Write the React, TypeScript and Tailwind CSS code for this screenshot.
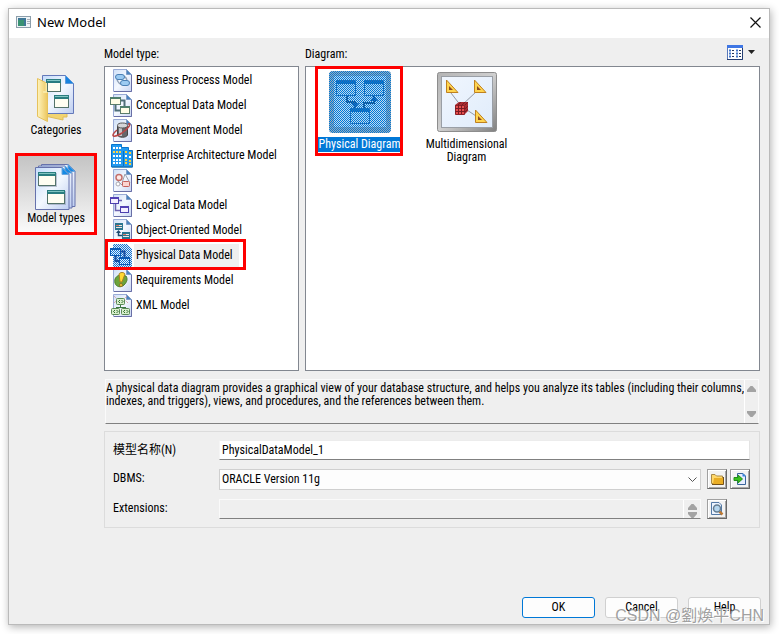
import React from "react";

const uiFont = "font-['Roboto_Condensed',Roboto,'Liberation_Sans','Noto_Sans_CJK_SC',sans-serif]";

function Page({ children }: { children?: React.ReactNode }) {
  return (
    <svg viewBox="0 0 24 24" className="block h-6 w-6 shrink-0" aria-hidden="true">
      <defs>
        <linearGradient id="page" x1="0" y1="0" x2="1" y2="1">
          <stop offset="0" stopColor="#cfe0f7" />
          <stop offset="0.5" stopColor="#f4f8ff" />
          <stop offset="1" stopColor="#c9d6f2" />
        </linearGradient>
      </defs>
      <path d="M3.500 .5H16.500L21.500 5.500V22.500H3.500Z" fill="url(#page)" stroke="#9aabd6" />
      <path d="M4 22.500H21.500V6" fill="none" stroke="#696fa6" />
      <path d="M16.500 .5V5.500H21.500Z" fill="#4b83bd" stroke="#7f9dc8" />
      {children}
    </svg>
  );
}

function Win({ x, y, w, h, stroke, fill, bar }: { x: number; y: number; w: number; h: number; stroke: string; fill: string; bar: string }) {
  return (
    <g>
      <rect x={x + 0.5} y={y + 0.5} width={w - 1} height={h - 1} fill={fill} stroke={stroke} />
      <rect x={x} y={y} width={w} height={2} fill={bar} />
    </g>
  );
}

const BusinessIcon = () => (
  <Page>
    <g stroke="#4a7fb4" fill="#9ccbf2">
      <path d="M7 9c0 5 4 7 6 6M12 7c4 0 5 3 5 6" fill="none" stroke="#8fa0b5" strokeWidth="1.500" />
      <rect x="5.500" y="5.500" width="9" height="5" rx="2.500" />
      <rect x="10.500" y="11.500" width="9" height="5" rx="2.500" />
    </g>
  </Page>
);
const ConceptualIcon = () => (
  <Page>
    <path d="M5.500 10v6.500H12M11 6.500h3.500V12" fill="none" stroke="#4f6f78" strokeWidth="2" />
    <Win x={0} y={3} w={11} h={8} stroke="#5b7d6a" fill="#fffde6" bar="#4f7f6c" />
    <Win x={10} y={12} w={10} h={8} stroke="#5b7d6a" fill="#fffde6" bar="#4f7f6c" />
  </Page>
);
const MovementIcon = () => (
  <Page>
    <path d="M7.500 7v9c1 3 9 3 10 0V7" fill="#66676b" stroke="#444" />
    <path d="M9 8v9h3V8" fill="#c4c4c8" />
    <ellipse cx="12.500" cy="6.500" rx="5" ry="2.500" fill="#d5d5d8" stroke="#555" />
    <path d="M7 11c-8 7-3 8 5 3C19 9 22 4 18 5" fill="none" stroke="#b94747" strokeWidth="1.500" />
  </Page>
);
const EnterpriseIcon = () => (
  <svg viewBox="0 0 24 24" className="block h-6 w-6 shrink-0" aria-hidden="true">
    <path d="M1.500 .5H11.500V3.500H18.500V6.500H22.500V23H1.500Z" fill="#2299f0" stroke="#0877cf" />
    <path d="M13.500 7V22" stroke="#0973c4" />
    <path d="M22.500 7V23H2" fill="none" stroke="#2570a6" />
    {[4, 8, 12, 16, 19].map((y) => (
      <path key={y} d={`M3 ${y}h2M6 ${y}h2M9 ${y}h2`} stroke={y === 8 ? "#ffd54a" : "#ffffff"} strokeWidth="2" />
    ))}
    {[8, 12, 16, 19].map((y) => (
      <path key={y} d={`M15 ${y}h2M19 ${y + 1}h2`} stroke={y === 12 ? "#ffffff" : "#ffcf33"} strokeWidth="2" />
    ))}
  </svg>
);
const FreeIcon = () => (
  <Page>
    <path d="M12 14 15 5l5 9M8 12l4 4 5-2" fill="none" stroke="#9ba0ad" />
    <circle cx="9" cy="8.500" r="3" fill="#fde9e7" stroke="#c4706b" strokeWidth="1.500" />
    <circle cx="8" cy="15" r="2" fill="#fff" stroke="#a9a9b5" />
    <rect x="12.500" y="12.500" width="7" height="5" rx="1" fill="#fbd5d1" stroke="#c4605b" />
  </Page>
);
const LogicalIcon = () => (
  <Page>
    <path d="M5.500 9v7.500H11M9 6.500h3" fill="none" stroke="#6c62b0" strokeWidth="1.500" />
    <Win x={0} y={3} w={9} h={7} stroke="#4c3fae" fill="#f4efff" bar="#5342b5" />
    <Win x={10} y={12} w={9} h={7} stroke="#4c3fae" fill="#f4efff" bar="#5342b5" />
  </Page>
);
const ObjectIcon = () => (
  <Page>
    <path d="M8.500 12v4.500H13" fill="none" stroke="#1e4a70" strokeWidth="1.500" />
    <path d="M6 14l2.500-3 2.500 3z" fill="#1e4a70" />
    {[[5, 4], [12, 13]].map(([x, y]) => (
      <g key={x}>
        <rect x={x} y={y} width="8" height="7" fill="#2a7590" />
        <path d={`M${x + 1} ${y + 2}.500h6M${x + 1} ${y + 4}.500h6`} stroke="#f0e4dd" />
        <path d={`M${x + 1} ${y + 2}.500h3`} stroke="#d87867" />
      </g>
    ))}
  </Page>
);
const PhysicalIcon = () => (
  <svg viewBox="0 0 24 24" className="block h-6 w-6 shrink-0" aria-hidden="true">
    <defs>
      <pattern id="smallDither" width="2" height="2" patternUnits="userSpaceOnUse">
        <path d="M0 0h1v1H0zM1 1h1v1H1z" fill="#1575d2" />
      </pattern>
    </defs>
    <path d="M3 0H17L22 5V23H3Z" fill="#dfe9f6" />
    <path d="M3 0H17L22 5V23H3Z" fill="url(#smallDither)" shapeRendering="crispEdges" />
    <path d="M5.500 10v7H11M11 7.500h3.500V13" fill="none" stroke="#174da0" strokeWidth="2" />
    <Win x={0} y={4} w={11} h={8} stroke="#0a59b4" fill="#e4f2ff" bar="#0a59b4" />
    <Win x={9} y={13} w={11} h={8} stroke="#0a59b4" fill="#e4f2ff" bar="#0a59b4" />
    <path d="M1 6h9v5H1zM10 15h9v5h-9z" fill="url(#smallDither)" shapeRendering="crispEdges" />
  </svg>
);
const RequirementsIcon = () => (
  <Page>
    <path d="M10 6c-4 1-6 4-5 8s6 5 9 2 4-6 2-9z" fill="#6ca43c" stroke="#4c7d2d" />
    <path d="M9 5C10 3 14 3 15 5L12 13H10Z" fill="#ffd832" stroke="#a78022" />
    <circle cx="11" cy="16" r="1.500" fill="#ffd832" stroke="#89702a" />
  </Page>
);
const XmlIcon = () => (
  <Page>
    <path d="M10.500 10v4M6 13.500h10" fill="none" stroke="#3c7744" />
    <path d="M4 2 8 6M17 2 13 6M4 9l3-3M18 9l-3-3" stroke="#db8b93" strokeDasharray="1 1" />
    {[[6, 4], [1, 14], [11, 14]].map(([x, y]) => (
      <g key={x}>
        <rect x={x + 0.5} y={y + 0.5} width="8" height="6" rx="1" fill="#d9f0cd" stroke="#5b8b55" />
        <path d={`M${x + 4} ${y + 2} ${x + 2.5} ${y + 3.5}l1.500 1.500M${x + 5.5} ${y + 2}l1.500 1.500-1.500 1.500`} fill="none" stroke="#2e6a2e" />
      </g>
    ))}
  </Page>
);

const models = [
  { name: "Business Process Model", Icon: BusinessIcon },
  { name: "Conceptual Data Model", Icon: ConceptualIcon },
  { name: "Data Movement Model", Icon: MovementIcon },
  { name: "Enterprise Architecture Model", Icon: EnterpriseIcon },
  { name: "Free Model", Icon: FreeIcon },
  { name: "Logical Data Model", Icon: LogicalIcon },
  { name: "Object-Oriented Model", Icon: ObjectIcon },
  { name: "Physical Data Model", Icon: PhysicalIcon, selected: true },
  { name: "Requirements Model", Icon: RequirementsIcon },
  { name: "XML Model", Icon: XmlIcon },
];

const CategoriesIcon = () => (
  <svg viewBox="0 0 40 50" className="block h-[50px] w-10" aria-hidden="true">
    <defs>
      <linearGradient id="sidePage" x1="0" y1="0" x2="1" y2="1">
        <stop offset="0" stopColor="#c4dcfb" />
        <stop offset=".5" stopColor="#f3f8ff" />
        <stop offset="1" stopColor="#bdcdf0" />
      </linearGradient>
      <linearGradient id="folder" x1="0" y1="0" x2="1" y2="0">
        <stop offset="0" stopColor="#fff4bd" />
        <stop offset="1" stopColor="#ecc75f" />
      </linearGradient>
    </defs>
    <path d="M9 38H31V43H27V46L9 42Z" fill="#f2d471" stroke="#dfbd5a" />
    <path d="M6.500 1.500H29.500L37.500 9.500V39.500H6.500Z" fill="url(#sidePage)" stroke="#6479ba" />
    <path d="M29.500 1.500V9.500H37.500Z" fill="#1884e0" stroke="#5d99dc" />
    <path d="M1.500 4.500 11.500 9.500V47.500L1.500 42.500Z" fill="url(#folder)" stroke="#e6c25c" />
    <path d="M10.500 9V18H7" fill="none" stroke="#f8e8a4" strokeWidth="2" />
    <rect x="11.500" y="5.500" width="13" height="12" fill="#fffef2" stroke="#54736a" />
    <rect x="10" y="5" width="15" height="4" fill="#2a7d80" />
    <rect x="18.500" y="21.500" width="14" height="12" fill="#fffef2" stroke="#54736a" />
    <rect x="18" y="21" width="15" height="4" fill="#2a7d80" />
    <path d="M11 6.500h13M19 22.500h13" stroke="#84c7c5" />
  </svg>
);

const ModelTypesIcon = () => (
  <svg viewBox="0 0 44 50" className="block h-[50px] w-11" aria-hidden="true">
    {[6, 3, 0].map((o) => (
      <g key={o}>
        <path d={`M${1.5 + o} ${5.5 - o / 2}H${28 + o}L${35 + o} ${12 - o / 2}V${47.5 - o / 2}H${1.5 + o}Z`} fill="url(#sidePage)" stroke="#6672ac" />
        <path d={`M${28 + o} ${5.5 - o / 2}V${12.5 - o / 2}H${35 + o}Z`} fill="#168be5" stroke="#69a6de" />
      </g>
    ))}
    {[[4, 10], [13, 28]].map(([x, y]) => (
      <g key={x}>
        <rect x={x + 1} y={y + 1} width="18" height="14" fill="#8590a5" opacity=".5" />
        <rect x={x + 0.5} y={y + 0.5} width="17" height="13" fill="#fffef2" stroke="#54736a" />
        <rect x={x} y={y} width="18" height="4" fill="#2a7d80" />
        <path d={`M${x + 1} ${y + 1}.500h16`} stroke="#80c4c0" />
      </g>
    ))}
  </svg>
);

const PhysicalDiagramIcon = () => (
  <svg viewBox="0 0 62 62" className="block h-[62px] w-[62px]" aria-hidden="true">
    <defs>
      <pattern id="dither" width="2" height="2" patternUnits="userSpaceOnUse">
        <path d="M0 0h1v1H0zM1 1h1v1H1z" fill="#0078d7" />
      </pattern>
    </defs>
    <rect width="62" height="62" rx="4" fill="#9eacb8" />
    <rect x="5" y="5" width="52" height="51" fill="#bfdaf0" />
    <path d="M18 25V31H26V37M35 37V32H45V25" fill="none" stroke="#244c7c" strokeWidth="2" />
    <path d="M22 32h8l-4 5zM41 30h8l-4-5z" fill="#1556a4" />
    <path d="M7.500 9.500h19v15h-19zM35.500 9.500h19v15h-19zM21.500 37.500h19v15h-19z" fill="#b9d8ef" stroke="#2869ae" />
    <path d="M7 10h20v3H7zM35 10h20v3H35zM21 38h20v3H21z" fill="#1767b3" />
    <rect width="62" height="62" rx="4" fill="url(#dither)" />
  </svg>
);

const MultiDiagramIcon = () => (
  <svg viewBox="0 0 60 60" className="block h-[60px] w-[60px]" aria-hidden="true">
    <defs>
      <linearGradient id="multiFrame" x1="0" y1="0" x2="1" y2="1">
        <stop offset="0" stopColor="#b4b4b4" />
        <stop offset=".5" stopColor="#cfcfcf" />
        <stop offset="1" stopColor="#808080" />
      </linearGradient>
      <linearGradient id="multiInner" x1="0" y1="0" x2="1" y2="1">
        <stop offset="0" stopColor="#f0f6fe" />
        <stop offset="1" stopColor="#e0ecfb" />
      </linearGradient>
    </defs>
    <rect x=".5" y=".5" width="59" height="59" rx="2" fill="url(#multiFrame)" stroke="#8d8d8d" />
    <rect x="4.500" y="4.500" width="51" height="51" fill="url(#multiInner)" stroke="#9a9fa6" />
    <path d="M14 21 24 34 40 19M24 34 42 46" fill="none" stroke="#9299a4" />
    {[[9, 8], [37, 8], [38, 38]].map(([x, y]) => (
      <g key={`${x}-${y}`}>
        <path d={`M${x + 0.5} ${y}V${y + 12}.500H${x + 12}Z`} fill="#ffd44f" stroke="#bf8120" />
        <path d={`M${x + 3} ${y + 6}V${y + 10}H${x + 7}Z`} fill="#8b4a1f" />
      </g>
    ))}
    <path d="M18 33 22 30H31V39L28 42H18Z" fill="#a92b30" />
    <path d="M18.500 33.500H27.500V42.500H18.500Z" fill="#e54e4d" stroke="#8c2028" />
    <path d="M21.500 33v9M24.500 33v9M18 36.500h10M18 39.500h10M28 33l3-3M28 37l3-3M28 40l3-3M21 33l3-3M25 33l3-3" stroke="#7b1b23" />
  </svg>
);

function Arrow({ down }: { down?: boolean }) {
  return (
    <svg viewBox="0 0 9 6" className="block h-[6px] w-[9px] shrink-0" aria-hidden="true">
      <path d={down ? "M0 0H9V2L5.500 6H3.500L0 2Z" : "M0 6H9V4L5.500 0H3.500L0 4Z"} fill="#a3a3a3" />
    </svg>
  );
}

function ToolButton({ label, children }: { label: string; children: React.ReactNode }) {
  return (
    <button type="button" aria-label={label} className="flex h-5 w-5 items-center justify-center border border-t-[#a0a0a0] border-r-[#696969] border-b-[#696969] border-l-[#a0a0a0] bg-[#f3f3f3] shadow-[inset_1px_1px_0_white,inset_-1px_-1px_0_#a8a8a8]">
      {children}
    </button>
  );
}

export default function App() {
  return (
    <div className={`flex min-h-screen bg-white pt-2 pr-[9px] pb-[9px] pl-2 text-[12px] leading-[13px] text-black ${uiFont}`}>
      <main className="relative flex min-w-0 flex-1 flex-col border border-[#bababa] bg-[#efefef] shadow-[1px_2px_8px_rgba(0,0,0,0.3)]">
        <header className="flex h-[29px] shrink-0 items-center bg-white pr-2 pb-[3px] pl-[7px]">
          <svg viewBox="0 0 15 12" className="h-3 w-[15px]" aria-hidden="true">
            <rect x=".5" y=".5" width="14" height="11" fill="#eef3f6" stroke="#8c9eab" />
            <rect x="2" y="2" width="8" height="8" fill="#3e7797" />
            <rect x="2" y="4" width="6" height="6" fill="#399273" />
            <path d="M11 3.500h3M11 5.500h3M11 7.500h3" stroke="#a7b0b9" />
          </svg>
          <h1 className="ml-[6px] flex-1 font-['Noto_Sans',sans-serif] text-[13px] leading-4">New Model</h1>
          <button type="button" aria-label="Close" className="p-0">
            <svg viewBox="0 0 11 11" className="block h-[11px] w-[11px]" aria-hidden="true">
              <path d="M.5 .5 10.500 10.500M10.500 .5 .5 10.500" stroke="#111" strokeWidth="1.200" />
            </svg>
          </button>
        </header>

        <div className="flex flex-1 gap-[7px] pr-[9px] pb-[6px] pl-[6px]">
          <nav className="flex w-[82px] shrink-0 flex-col pt-[34px]">
            <button type="button" className="flex h-[81px] flex-col items-center pt-[2px]">
              <CategoriesIcon />
              <span>Categories</span>
            </button>
            <button type="button" aria-pressed="true" className="flex h-[82px] flex-col items-center border-[3px] border-[#fe0000] bg-linear-to-b from-[#c4c4c4] via-[#dedede] to-[#fafafa] pt-[6px]">
              <ModelTypesIcon />
              <span>Model types</span>
            </button>
          </nav>

          <div className="flex min-w-0 flex-1 flex-col">
            <div className="flex flex-1 gap-[6px]">
              <section className="flex w-[195px] shrink-0 flex-col">
                <h2 className="flex h-7 items-center pt-1">Model type:</h2>
                <ul className="relative flex-1 border border-[#828790] bg-white pt-px">
                  {models.map(({ name, Icon, selected }) => (
                    <li key={name} className="h-[25px]">
                      <button type="button" className="flex h-[25px] items-center pl-[5px]">
                        <Icon />
                        <span className={selected ? "flex h-6 items-center bg-[#efefef] pr-[6px] pl-[2px]" : "pl-[2px]"}>{name}</span>
                      </button>
                    </li>
                  ))}
                  <li aria-hidden="true" className="pointer-events-none absolute top-[172px] left-0 h-[31px] w-[141px] border-[3px] border-[#fe0000]" />
                </ul>
              </section>

              <section className="flex min-w-0 flex-1 flex-col">
                <div className="flex h-7 items-center justify-between pr-[5px]">
                  <h2 className="pt-1">Diagram:</h2>
                  <button type="button" aria-label="View" className="flex items-center gap-[5px]">
                    <svg viewBox="0 0 16 15" className="h-[15px] w-4" aria-hidden="true">
                      <rect x=".5" y=".5" width="15" height="14" fill="#fff" stroke="#5878ba" />
                      <rect width="16" height="3" fill="#3f76e4" />
                      <path d="M15.500 3V14.500H0" fill="none" stroke="#263f73" />
                      <path d="M2 5.500h2M9 5.500h2M2 8.500h2M9 8.500h2M2 11.500h2M9 11.500h2" stroke="#4376c8" strokeWidth="2" />
                      <path d="M5 5.500h2M12 5.500h2M5 8.500h2M12 8.500h2M5 11.500h2M12 11.500h2" stroke="#26375c" />
                    </svg>
                    <svg viewBox="0 0 7 4" className="h-1 w-[7px]" aria-hidden="true"><path d="M0 0h7L3.500 4z" fill="#222" /></svg>
                  </button>
                </div>
                <div className="relative flex flex-1 border border-[#828790] bg-white">
                  <button type="button" aria-pressed="true" className="flex w-[107px] flex-col items-center self-start pt-1">
                    <PhysicalDiagramIcon />
                    <span className="mt-1 bg-[#0078d7] px-[2px] py-px text-white">Physical Diagram</span>
                  </button>
                  <button type="button" className="flex w-[107px] flex-col items-center self-start pt-[5px]">
                    <MultiDiagramIcon />
                    <span className="mt-[6px]">Multidimensional<br />Diagram</span>
                  </button>
                  <span aria-hidden="true" className="pointer-events-none absolute -top-px left-[9px] h-[90px] w-[88px] border-[3px] border-[#fe0000]" />
                </div>
              </section>
            </div>

            <section className="mx-px mt-2 flex h-[45px] border border-t-[#fafafa] border-r-[#fafafa] border-b-[#808080] border-l-[#fafafa]">
              <p className="min-w-0 flex-1 pt-[2px]">
                A physical data diagram provides a graphical view of your database structure, and helps you analyze its tables (including their columns, indexes, and triggers), views, and procedures, and the references between them.
              </p>
              <div className="flex w-[14px] shrink-0 flex-col items-center justify-between border-l border-white py-[6px]">
                <button type="button" aria-label="Scroll up"><Arrow /></button>
                <button type="button" aria-label="Scroll down"><Arrow down /></button>
              </div>
            </section>

            <form className="mt-[7px] grid h-[97px] grid-cols-[106px_1fr_20px_23px] grid-rows-[20px_21px_20px] content-start gap-y-[9px] border border-[#dcdcdc] pt-2 pr-[9px] pl-2">
              <label htmlFor="name" className="self-center">模型名称(N)</label>
              <input id="name" defaultValue="PhysicalDataModel_1" className="col-span-3 min-w-0 border border-t-[#ececec] border-r-[#e3e3e3] border-b-[#808080] border-l-[#f5f5f5] bg-white px-[2px]" />
              <label htmlFor="dbms" className="pt-[3px]">DBMS:</label>
              <div className="relative mr-[6px]">
                <select id="dbms" className="h-[21px] w-full appearance-none border border-[#cfcfcf] bg-[#fdfdfd] px-[2px]">
                  <option>ORACLE Version 11g</option>
                </select>
                <svg viewBox="0 0 9 5" className="pointer-events-none absolute top-2 right-1 h-[5px] w-[9px]" aria-hidden="true">
                  <path d="M.5 .5 4.500 4.500 8.500 .5" fill="none" stroke="#555" />
                </svg>
              </div>
              <ToolButton label="Open folder">
                <svg viewBox="0 0 14 14" className="h-[14px] w-[14px]" aria-hidden="true">
                  <path d="M1.500 11.500V2.500H5L6.500 4H12.500V11.500Z" fill="#ffd86a" stroke="#a98a48" />
                  <path d="M3 12 4 6H13V12Z" fill="#e9ad25" />
                  <path d="M2 12.500H13.500V5" fill="none" stroke="#735019" />
                </svg>
              </ToolButton>
              <div className="pl-[3px]">
                <ToolButton label="Import">
                  <svg viewBox="0 0 14 14" className="h-[14px] w-[14px]" aria-hidden="true">
                    <path d="M4.500 1.500H10L12.500 4V12.500H4.500Z" fill="#e7eeff" stroke="#39659b" />
                    <path d="M9.500 1V4.500H13Z" fill="#3384dd" />
                    <path d="M1 5.500H5V3L9.500 7 5 11V8.500H1Z" fill="#39c31d" stroke="#238c18" />
                  </svg>
                </ToolButton>
              </div>
              <label htmlFor="ext" className="pt-[3px]">Extensions:</label>
              <div className="mr-[6px] flex overflow-hidden border border-t-[#fafafa] border-r-[#fafafa] border-b-[#808080] border-l-[#fafafa]">
                <input id="ext" readOnly className="min-w-0 flex-1 bg-transparent" />
                <div className="flex w-[17px] flex-col items-center gap-[2px] border-l border-white pt-1">
                  <Arrow />
                  <Arrow down />
                </div>
              </div>
              <ToolButton label="Browse extensions">
                <svg viewBox="0 0 14 14" className="h-[14px] w-[14px]" aria-hidden="true">
                  <path d="M1.500 .5H9L11.500 3V12.500H1.500Z" fill="#edf4ff" stroke="#547aa7" />
                  <path d="m9.500 9.500 3 3" stroke="#bd7b36" strokeWidth="2.500" />
                  <circle cx="7" cy="6.500" r="3.500" fill="#b5d6ef" stroke="#667d91" strokeWidth="1.500" />
                </svg>
              </ToolButton>
            </form>

            <footer className="mt-[69px] -mr-px flex justify-end gap-[10px]">
              <button type="button" className="h-[21px] w-[73px] rounded-[3px] border border-[#0078d7] bg-[#fdfdfd]">OK</button>
              <button type="button" className="h-[21px] w-[73px] rounded-[3px] border border-[#d0d0d0] bg-[#fdfdfd]">Cancel</button>
              <button type="button" className="h-[21px] w-[73px] rounded-[3px] border border-[#d0d0d0] bg-[#fdfdfd]">Help</button>
            </footer>
          </div>
        </div>
        <p className="pointer-events-none absolute right-[5px] -bottom-[2px] font-['Liberation_Sans','Noto_Sans_CJK_TC',sans-serif] text-[16px] leading-5 whitespace-nowrap text-[#888888]/80 [text-shadow:1px_1px_0_white]">CSDN @劉煥平CHN</p>
      </main>
    </div>
  );
}
